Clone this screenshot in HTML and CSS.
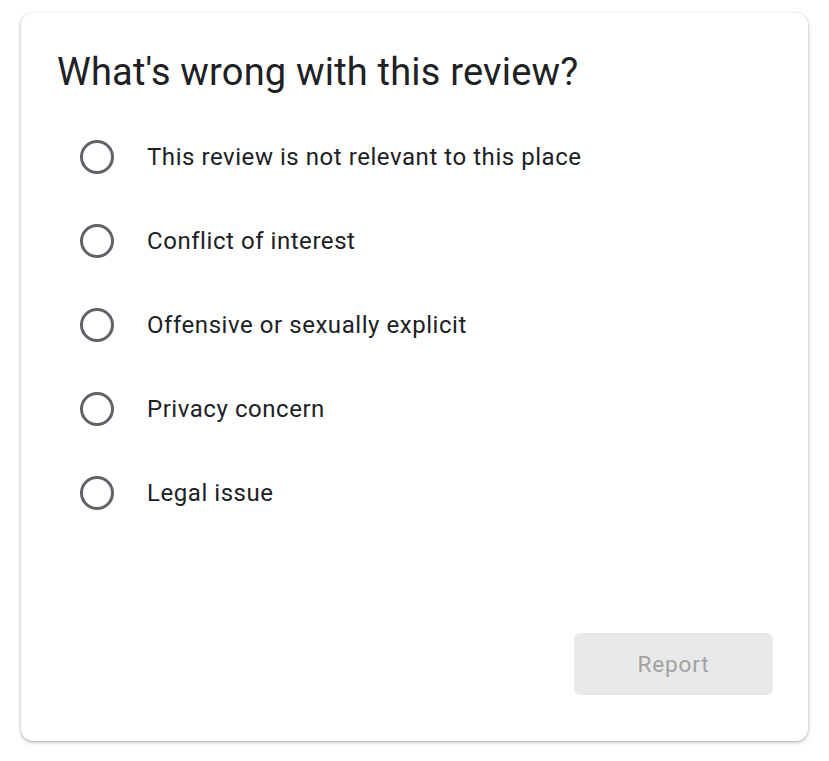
FILE: index.html
```html
<!DOCTYPE html>
<html lang="en">
<head>
    <meta charset="UTF-8">
    <meta name="viewport" content="width=device-width, initial-scale=1.0">
    <title>Report review</title>
    <link rel="stylesheet" href="styles.css">
</head>
<body>
    <div class="card">
        <h1>What's wrong with this review?</h1>
        <ul class="options">
            <li><span class="radio"></span><span>This review is not relevant to this place</span></li>
            <li><span class="radio"></span><span>Conflict of interest</span></li>
            <li><span class="radio"></span><span>Offensive or sexually explicit</span></li>
            <li><span class="radio"></span><span>Privacy concern</span></li>
            <li><span class="radio"></span><span>Legal issue</span></li>
        </ul>
        <div class="actions">
            <button class="report-btn" disabled>Report</button>
        </div>
    </div>
</body>
</html>
```

FILE: styles.css
```css
body {
    font-family: Roboto, Arial, sans-serif;
    color: #202124;
    background-color: #fff;
    margin: 0;
    padding: 13px 21px 20px 21px;
}

.card {
    width: 787px;
    height: 728px;
    box-sizing: border-box;
    background: white;
    border-radius: 12px;
    box-shadow: 0 1px 3px rgba(0, 0, 0, 0.3), 0 2px 6px rgba(0, 0, 0, 0.08);
    padding: 37px 36px 46px 36px;
    display: flex;
    flex-direction: column;
}

h1 {
    font-size: 38px;
    font-weight: 400;
    letter-spacing: 0.2px;
    margin: 0;
    line-height: 44px;
}

.options {
    list-style: none;
    margin: 21px 0 0 0;
    padding: 0;
}

.options li {
    display: flex;
    align-items: center;
    height: 84px;
    font-size: 24px;
    letter-spacing: 0.55px;
    color: #202124;
}

.radio {
    width: 28px;
    height: 28px;
    border: 3px solid #5f6368;
    border-radius: 50%;
    margin-left: 23px;
    margin-right: 33px;
    flex-shrink: 0;
}

.actions {
    margin-top: auto;
    display: flex;
    justify-content: flex-end;
}

.report-btn {
    width: 199px;
    height: 62px;
    border: none;
    border-radius: 6px;
    background: #e8e9e9;
    color: #a2a2a2;
    font-family: Roboto, Arial, sans-serif;
    font-size: 22.5px;
    letter-spacing: 0.9px;
    margin-right: -1px;
}
```
